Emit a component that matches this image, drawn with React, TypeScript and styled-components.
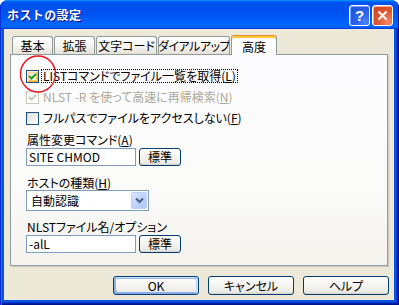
import React from 'react';
import styled, { createGlobalStyle, css } from 'styled-components';

const Global = createGlobalStyle`
  html, body { margin: 0; padding: 0; background: #ffffff; }
  body {
    font-family: "Noto Sans CJK JP", "Noto Sans", sans-serif;
    font-size: 12px;
    font-feature-settings: "palt" 1;
    color: #000;
  }
  * { box-sizing: border-box; }
`;

const Window = styled.div`
  position: relative;
  width: 399px;
  height: 305px;
  display: flex;
  flex-direction: column;
  border-radius: 8px 8px 0 0;
  overflow: hidden;
  background: #0831d9;
`;

const TitleBar = styled.div`
  height: 29px;
  flex: none;
  display: flex;
  align-items: center;
  padding: 0 6px 0 7px;
  background: linear-gradient(180deg, #0997ff, #0053ee 8%, #0050ee 40%, #0066ff 88%, #0066ff 93%, #005bff 95%, #003dd7 96%, #003dd7);
  box-shadow: inset 1px 0 #0831d9, inset -1px 0 #00138c;
`;

const Title = styled.div`
  flex: 1;
  color: #fff;
  font-weight: bold;
  font-size: 12px;
  font-feature-settings: normal;
  letter-spacing: 0.4px;
  line-height: 14px;
  text-shadow: 1px 1px #0f1089;
  padding-top: 1px;
`;

const Controls = styled.div`
  display: flex;
  gap: 2px;
  padding-top: 1px;
`;

const CtrlButton = styled.div<{ $kind: 'help' | 'close' }>`
  width: 21px;
  height: 21px;
  border: 1px solid #fff;
  border-radius: 3px;
  display: flex;
  align-items: center;
  justify-content: center;
  color: #fff;
  font-family: "Liberation Sans", sans-serif;
  font-weight: bold;
  font-size: 15px;
  ${(p) =>
    p.$kind === 'help'
      ? css`
          background: radial-gradient(circle at 80% 85%, #4a80f6 0%, #2a62ec 45%, #1f4fda 100%);
          box-shadow: inset 1px 1px #7aa4fb;
        `
      : css`
          background: radial-gradient(circle at 80% 85%, #f0896a 0%, #e05a33 45%, #c7401b 100%);
          box-shadow: inset 1px 1px #f7a88e;
        `}
`;

const Frame = styled.div`
  flex: 1;
  display: flex;
  padding: 0 5px 5px 4px;
  background: #0855dd;
  box-shadow: inset 1px 0 #0831d9, inset 2px 0 #166aee, inset -1px -1px #00138c, inset -2px -2px #001ea0, inset -3px -3px #003bda;
`;

const Body = styled.div`
  flex: 1;
  display: flex;
  flex-direction: column;
  background: #ece9d8;
  padding: 6px 5px 0 6px;
`;

const TabBar = styled.div`
  height: 19px;
  display: flex;
  align-items: flex-end;
  padding-left: 2px;
  position: relative;
  z-index: 1;
`;

const Tab = styled.div<{ $w: number; $active?: boolean; $ls?: number }>`
  width: ${(p) => p.$w}px;
  margin-right: 1px;
  height: 18px;
  border: 1px solid #919b9c;
  border-bottom: none;
  border-radius: 3px 3px 0 0;
  display: flex;
  align-items: center;
  justify-content: center;
  line-height: 14px;
  padding-top: 1px;
  white-space: nowrap;
  overflow: hidden;
  letter-spacing: ${(p) => p.$ls ?? 0}px;
  background: linear-gradient(180deg, #ffffff, #f3f2ee 60%, #e4e1d6);
  ${(p) =>
    p.$active &&
    css`
      height: 20px;
      margin-bottom: -1px;
      background: #fcfcfe;
      border-top: 1px solid #e68b2c;
      box-shadow: inset 0 2px #ffc73c;
      padding-top: 2px;
    `}
`;

const Panel = styled.div`
  width: 378px;
  height: 212px;
  border: 1px solid #919b9c;
  background: linear-gradient(180deg, #fcfcfe, #fbfbfa 60%, #f4f3ee);
  box-shadow: 1px 1px #d0cebf, 2px 2px #e3e0d0;
  display: flex;
  flex-direction: column;
  padding: 14px 0 0 15px;
`;

const CheckRow = styled.div<{ $mt?: number; $disabled?: boolean }>`
  height: 14px;
  margin-top: ${(p) => p.$mt ?? 0}px;
  display: flex;
  align-items: center;
  color: ${(p) => (p.$disabled ? '#aca899' : '#000')};
`;

const Box = styled.div<{ $disabled?: boolean; $hot?: boolean }>`
  width: 13px;
  height: 13px;
  flex: none;
  border: 1px solid ${(p) => (p.$disabled ? '#cac8bb' : '#1c5180')};
  background: ${(p) => (p.$disabled ? '#ffffff' : 'linear-gradient(135deg, #dcdcd7, #ffffff)')};
  ${(p) =>
    p.$hot &&
    css`
      box-shadow: inset 1px 1px #fff0cf, inset -1px -1px #f8b330, inset 2px 2px #fcd690, inset -2px -2px #fbc45e;
    `}
  display: flex;
  align-items: center;
  justify-content: center;
`;

const LabelText = styled.span<{ $focus?: boolean }>`
  margin-left: 2px;
  height: 14px;
  padding: 0 1px;
  line-height: 12px;
  border: 1px solid transparent;
  white-space: nowrap;
  ${(p) =>
    p.$focus &&
    css`
      border: 1px dotted #000;
    `}
`;

const FieldLabel = styled.div<{ $mt: number }>`
  margin-top: ${(p) => p.$mt}px;
  height: 14px;
  line-height: 14px;
  padding-left: 1px;
  white-space: nowrap;
`;

const FieldRow = styled.div<{ $mt: number }>`
  margin-top: ${(p) => p.$mt}px;
  display: flex;
  align-items: center;
  gap: 3px;
`;

const TextInput = styled.div`
  width: 110px;
  height: 18px;
  border: 1px solid #7f9db9;
  background: #fff;
  padding-left: 2px;
  line-height: 16px;
  white-space: nowrap;
`;

const Button = styled.div<{ $w: number; $h: number; $default?: boolean }>`
  width: ${(p) => p.$w}px;
  height: ${(p) => p.$h}px;
  border: 1px solid #003c74;
  border-radius: 3px;
  background: linear-gradient(180deg, #ffffff, #ecebe6 86%, #d6d0c5);
  display: flex;
  align-items: center;
  justify-content: center;
  line-height: 14px;
  ${(p) =>
    p.$default &&
    css`
      box-shadow: inset -1px 1px #cee7ff, inset 1px 2px #98b8ea, inset -2px 2px #bcd4f6, inset 1px -1px #89ade4, inset 2px -2px #89ade4;
    `}
`;

const Select = styled.div`
  width: 123px;
  height: 21px;
  border: 1px solid #7f9db9;
  background: #fff;
  display: flex;
  align-items: center;
  padding: 1px;
`;

const SelectValue = styled.div`
  flex: 1;
  padding-left: 3px;
  line-height: 14px;
`;

const DropButton = styled.div`
  width: 16px;
  height: 17px;
  border: 1px solid #bacff9;
  border-radius: 2px;
  background: linear-gradient(135deg, #dce6fd, #c1d3fb 50%, #b0c6f6);
  display: flex;
  align-items: center;
  justify-content: center;
`;

const ButtonRow = styled.div`
  margin-top: 10px;
  display: flex;
  justify-content: flex-end;
  gap: 9px;
`;

const Annotation = styled.svg`
  position: absolute;
  left: 19px;
  top: 55px;
  z-index: 5;
`;

const Check = ({ color }: { color: string }) => (
  <svg width="9" height="9" viewBox="0 0 9 9">
    <path d="M1 4 L3.5 6.5 L8 2" fill="none" stroke={color} strokeWidth="2" />
  </svg>
);

export default function App() {
  return (
    <>
      <Global />
      <Window>
        <TitleBar>
          <Title>ホストの設定</Title>
          <Controls>
            <CtrlButton $kind="help">?</CtrlButton>
            <CtrlButton $kind="close">
              <svg width="11" height="11" viewBox="0 0 11 11">
                <path d="M1.5 1.5 L9.5 9.5 M9.5 1.5 L1.5 9.5" stroke="#fff" strokeWidth="2" />
              </svg>
            </CtrlButton>
          </Controls>
        </TitleBar>
        <Frame>
          <Body>
            <TabBar>
              <Tab $w={41}>基本</Tab>
              <Tab $w={41}>拡張</Tab>
              <Tab $w={61}>文字コード</Tab>
              <Tab $w={72} $ls={-0.5}>ダイアルアップ</Tab>
              <Tab $w={46} $active>高度</Tab>
            </TabBar>
            <Panel>
              <CheckRow>
                <Box $hot>
                  <Check color="#21a121" />
                </Box>
                <LabelText $focus>
                  LISTコマンドでファイル一覧を取得(<u>L</u>)
                </LabelText>
              </CheckRow>
              <CheckRow $mt={7} $disabled>
                <Box $disabled>
                  <Check color="#cac8bb" />
                </Box>
                <LabelText>
                  NLST -R を使って高速に再帰検索(<u>N</u>)
                </LabelText>
              </CheckRow>
              <CheckRow $mt={7}>
                <Box />
                <LabelText>
                  フルパスでファイルをアクセスしない(<u>F</u>)
                </LabelText>
              </CheckRow>
              <FieldLabel $mt={8}>
                属性変更コマンド(<u>A</u>)
              </FieldLabel>
              <FieldRow $mt={1}>
                <TextInput>SITE CHMOD</TextInput>
                <Button $w={42} $h={18}>標準</Button>
              </FieldRow>
              <FieldLabel $mt={10}>
                ホストの種類(<u>H</u>)
              </FieldLabel>
              <FieldRow $mt={0}>
                <Select>
                  <SelectValue>自動認識</SelectValue>
                  <DropButton>
                    <svg width="9" height="7" viewBox="0 0 9 7">
                      <path d="M1 1.5 L4.5 5 L8 1.5" fill="none" stroke="#4d6185" strokeWidth="2" />
                    </svg>
                  </DropButton>
                </Select>
              </FieldRow>
              <FieldLabel $mt={9}>NLSTファイル名/オプション</FieldLabel>
              <FieldRow $mt={1}>
                <TextInput>-alL</TextInput>
                <Button $w={42} $h={18}>標準</Button>
              </FieldRow>
            </Panel>
            <ButtonRow>
              <Button $w={86} $h={19} $default>OK</Button>
              <Button $w={86} $h={19}>キャンセル</Button>
              <Button $w={86} $h={19}>ヘルプ</Button>
            </ButtonRow>
          </Body>
        </Frame>
        <Annotation width="38" height="38" viewBox="0 0 38 38">
          <ellipse cx="19" cy="19" rx="17.5" ry="18" fill="none" stroke="#e8141b" strokeWidth="1.4" />
        </Annotation>
      </Window>
    </>
  );
}
